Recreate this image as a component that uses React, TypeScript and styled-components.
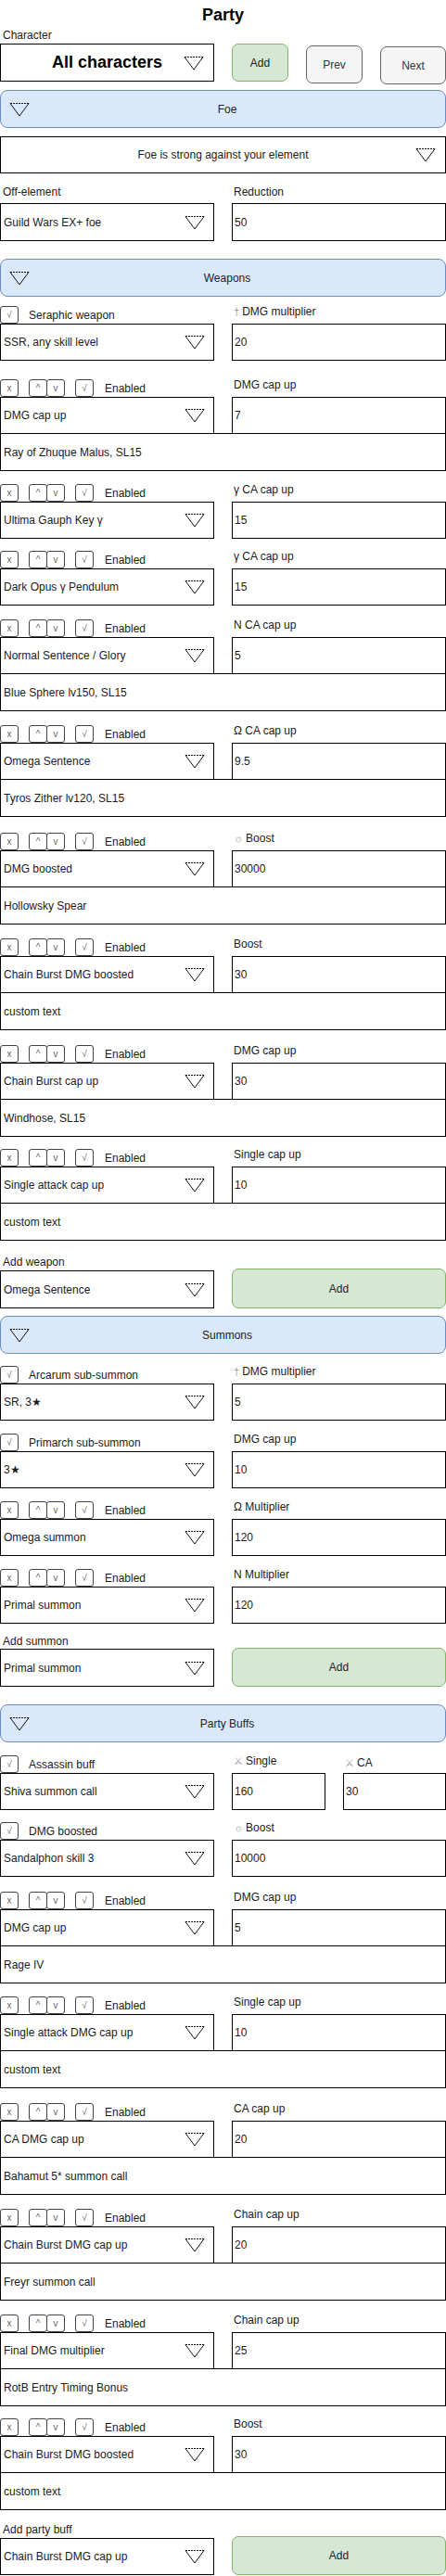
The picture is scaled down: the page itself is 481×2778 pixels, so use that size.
import React from 'react';
import styled, { createGlobalStyle } from 'styled-components';

const GlobalStyle = createGlobalStyle`
  html, body { margin: 0; padding: 0; background: #fff; }
  body { font-family: "Liberation Sans", Arial, Helvetica, sans-serif; }
  *, *::before, *::after { box-sizing: border-box; }
`;

const Page = styled.div`
  width: 481px;
  height: 2778px;
  display: flex;
  flex-direction: column;
  font-size: 12px;
  color: #1a1a1a;
`;

const Title = styled.h1`
  margin: 0;
  height: 31px;
  line-height: 32px;
  font-size: 18px;
  font-weight: bold;
  text-align: center;
  color: #000;
`;

const Label = styled.div<{ $mt?: number }>`
  margin-top: ${(p) => p.$mt ?? 0}px;
  height: 14px;
  line-height: 14px;
  padding-left: 3px;
  white-space: nowrap;
`;

const Glyph = styled.span`
  color: #999;
  font-size: 11px;
  margin-right: 3px;
`;

const TriSvg = styled.svg`
  display: block;
  flex: none;
`;

const Triangle = () => (
  <TriSvg width="22" height="16" viewBox="0 0 22 16">
    <path d="M1 1.5 L11 15 L21 1.5" fill="none" stroke="#111" strokeWidth="1" />
    <line x1="1" y1="1.5" x2="21" y2="1.5" stroke="#111" strokeWidth="1" strokeDasharray="2 1" />
  </TriSvg>
);

/* ---------- top row ---------- */
const CharRow = styled.div`
  margin-top: 2px;
  display: flex;
  align-items: flex-start;
  height: 44px;
`;

const BigSelect = styled.div`
  width: 231px;
  height: 41px;
  border: 1px solid #000;
  display: grid;
  grid-template-columns: 32px 1fr 32px;
  align-items: center;
  font-size: 18px;
  font-weight: bold;
  color: #000;
  text-align: center;
`;

const Btn = styled.div<{ $w: number; $h: number; $mt?: number; $tone: 'green' | 'gray' }>`
  width: ${(p) => p.$w}px;
  height: ${(p) => p.$h}px;
  margin-top: ${(p) => p.$mt ?? 0}px;
  margin-left: 19px;
  border-radius: 7px;
  display: flex;
  align-items: center;
  justify-content: center;
  font-size: 12px;
  color: #222;
  background: ${(p) => (p.$tone === 'green' ? '#d5e8d4' : '#f5f5f5')};
  border: 1px solid ${(p) => (p.$tone === 'green' ? '#82b366' : '#666')};
  ${(p) => (p.$tone === 'gray' ? 'color: #333;' : '')}
`;

/* ---------- section header ---------- */
const Header = styled.div<{ $mt: number }>`
  margin-top: ${(p) => p.$mt}px;
  height: 41px;
  background: #dae8fc;
  border: 1px solid #6c8ebf;
  border-radius: 8px;
  display: grid;
  grid-template-columns: 42px 1fr 42px;
  align-items: center;
  padding-left: 9px;
  color: #222;
  font-size: 12px;
  text-align: center;
`;

/* ---------- full-width centred select ---------- */
const WideSelect = styled.div<{ $mt: number }>`
  margin-top: ${(p) => p.$mt}px;
  height: 40px;
  border: 1px solid #000;
  display: grid;
  grid-template-columns: 32px 1fr 32px;
  align-items: center;
  text-align: center;
`;

/* ---------- two-column grids ---------- */
const Pair = styled.div<{ $mt?: number; $h: number; $cols?: string; $align?: string }>`
  margin-top: ${(p) => p.$mt ?? 0}px;
  height: ${(p) => p.$h}px;
  display: grid;
  grid-template-columns: ${(p) => p.$cols ?? '231px 231px'};
  column-gap: 19px;
  align-items: ${(p) => p.$align ?? 'stretch'};
`;

const Select = styled.div<{ $h?: number }>`
  height: ${(p) => p.$h ?? 40}px;
  border: 1px solid #000;
  display: flex;
  align-items: center;
  justify-content: space-between;
  padding: 0 9px 0 3px;
  white-space: nowrap;
`;

const Input = styled.div<{ $h?: number }>`
  height: ${(p) => p.$h ?? 40}px;
  border: 1px solid #000;
  display: flex;
  align-items: center;
  padding-left: 2px;
`;

const Note = styled.div`
  margin-top: -1px;
  height: 41px;
  border: 1px solid #000;
  display: flex;
  align-items: center;
  padding-left: 3px;
`;

const SideLabel = styled.div<{ $pt?: number }>`
  align-self: start;
  padding-top: ${(p) => p.$pt ?? 0}px;
  padding-left: 2px;
  line-height: 14px;
  white-space: nowrap;
`;

/* ---------- row tools ---------- */
const Tools = styled.div`
  display: flex;
  align-items: center;
  height: 20px;
`;

const Tool = styled.span<{ $ml?: number }>`
  width: 20px;
  height: 19px;
  margin-left: ${(p) => p.$ml ?? 0}px;
  border: 1px solid #444;
  border-radius: 3px;
  display: flex;
  align-items: center;
  justify-content: center;
  font-size: 10px;
  color: #666;
  flex: none;
`;

const ToolText = styled.span<{ $ml: number }>`
  margin-left: ${(p) => p.$ml}px;
  padding-top: 2px;
  white-space: nowrap;
`;

const Add = styled.div<{ $h: number }>`
  height: ${(p) => p.$h}px;
  background: #d5e8d4;
  border: 1px solid #82b366;
  border-radius: 7px;
  display: flex;
  align-items: center;
  justify-content: center;
  color: #222;
`;

type LabelSpec = { glyph?: string; text: string };

const Lbl = ({ l }: { l: LabelSpec }) => (
  <>
    {l.glyph && <Glyph>{l.glyph}</Glyph>}
    {l.text}
  </>
);

type Item =
  | { kind: 'tools'; mt: number; label: LabelSpec; select: string; value: string; note?: string }
  | { kind: 'check'; mt: number; check: string; label: LabelSpec; select: string; value: string }
  | { kind: 'add'; mt: number; label: string; select: string; btnH: number; selH: number }
  | { kind: 'header'; mt: number; title: string }
  | { kind: 'assassin'; mt: number };

const T = (
  mt: number,
  label: string,
  select: string,
  value: string,
  note?: string,
  glyph?: string
): Item => ({ kind: 'tools', mt, label: { text: label, glyph }, select, value, note });

const items: Item[] = [
  { kind: 'header', mt: 19, title: 'Weapons' },
  {
    kind: 'check',
    mt: 9,
    check: 'Seraphic weapon',
    label: { glyph: '†', text: 'DMG multiplier' },
    select: 'SSR, any skill level',
    value: '20',
  },
  T(19, 'DMG cap up', 'DMG cap up', '7', 'Ray of Zhuque Malus, SL15'),
  T(13, 'γ CA cap up', 'Ultima Gauph Key γ', '15'),
  T(12, 'γ CA cap up', 'Dark Opus γ Pendulum', '15'),
  T(14, 'N CA cap up', 'Normal Sentence / Glory', '5', 'Blue Sphere lv150, SL15'),
  T(14, 'Ω CA cap up', 'Omega Sentence', '9.5', 'Tyros Zither lv120, SL15'),
  T(16, 'Boost', 'DMG boosted', '30000', 'Hollowsky Spear', '☼'),
  T(14, 'Boost', 'Chain Burst DMG boosted', '30', 'custom text'),
  T(15, 'DMG cap up', 'Chain Burst cap up', '30', 'Windhose, SL15'),
  T(12, 'Single cap up', 'Single attack cap up', '10', 'custom text'),
  { kind: 'add', mt: 16, label: 'Add weapon', select: 'Omega Sentence', btnH: 43, selH: 41 },
  { kind: 'header', mt: 8, title: 'Summons' },
  {
    kind: 'check',
    mt: 12,
    check: 'Arcarum sub-summon',
    label: { glyph: '†', text: 'DMG multiplier' },
    select: 'SR, 3★',
    value: '5',
  },
  {
    kind: 'check',
    mt: 13,
    check: 'Primarch sub-summon',
    label: { text: 'DMG cap up' },
    select: '3★',
    value: '10',
  },
  T(13, 'Ω Multiplier', 'Omega summon', '120'),
  T(13, 'N Multiplier', 'Primal summon', '120'),
  { kind: 'add', mt: 12, label: 'Add summon', select: 'Primal summon', btnH: 42, selH: 41 },
  { kind: 'header', mt: 19, title: 'Party Buffs' },
  { kind: 'assassin', mt: 13 },
  {
    kind: 'check',
    mt: 12,
    check: 'DMG boosted',
    label: { glyph: '☼', text: 'Boost' },
    select: 'Sandalphon skill 3',
    value: '10000',
  },
  T(15, 'DMG cap up', 'DMG cap up', '5', 'Rage IV'),
  T(13, 'Single cap up', 'Single attack DMG cap up', '10', 'custom text'),
  T(15, 'CA cap up', 'CA DMG cap up', '20', 'Bahamut 5* summon call'),
  T(14, 'Chain cap up', 'Chain Burst DMG cap up', '20', 'Freyr summon call'),
  T(14, 'Chain cap up', 'Final DMG multiplier', '25', 'RotB Entry Timing Bonus'),
  T(12, 'Boost', 'Chain Burst DMG boosted', '30', 'custom text'),
  { kind: 'add', mt: 14, label: 'Add party buff', select: 'Chain Burst DMG cap up', btnH: 42, selH: 40 },
];

const RowTools = () => (
  <Tools>
    <Tool>x</Tool>
    <Tool $ml={11}>^</Tool>
    <Tool $ml={-1}>v</Tool>
    <Tool $ml={11}>√</Tool>
    <ToolText $ml={12}>Enabled</ToolText>
  </Tools>
);

const CheckTool = ({ text }: { text: string }) => (
  <Tools>
    <Tool>√</Tool>
    <ToolText $ml={11}>{text}</ToolText>
  </Tools>
);

const SelectBox = ({ text, h }: { text: string; h?: number }) => (
  <Select $h={h}>
    <span>{text}</span>
    <Triangle />
  </Select>
);

const renderItem = (it: Item, i: number) => {
  switch (it.kind) {
    case 'header':
      return (
        <Header key={i} $mt={it.mt}>
          <Triangle />
          <span>{it.title}</span>
          <span />
        </Header>
      );
    case 'tools':
      return (
        <React.Fragment key={i}>
          <Pair $mt={it.mt} $h={20}>
            <RowTools />
            <SideLabel>
              <Lbl l={it.label} />
            </SideLabel>
          </Pair>
          <Pair $h={40}>
            <SelectBox text={it.select} />
            <Input>{it.value}</Input>
          </Pair>
          {it.note && <Note>{it.note}</Note>}
        </React.Fragment>
      );
    case 'check':
      return (
        <React.Fragment key={i}>
          <Pair $mt={it.mt} $h={20}>
            <CheckTool text={it.check} />
            <SideLabel>
              <Lbl l={it.label} />
            </SideLabel>
          </Pair>
          <Pair $h={40}>
            <SelectBox text={it.select} />
            <Input>{it.value}</Input>
          </Pair>
        </React.Fragment>
      );
    case 'add':
      return (
        <React.Fragment key={i}>
          <Label $mt={it.mt}>{it.label}</Label>
          <Pair $h={it.btnH} $align="end">
            <SelectBox text={it.select} h={it.selH} />
            <Add $h={it.btnH}>Add</Add>
          </Pair>
        </React.Fragment>
      );
    case 'assassin':
      return (
        <React.Fragment key={i}>
          <Pair $mt={it.mt} $h={20} $cols="231px 101px 111px">
            <CheckTool text="Assassin buff" />
            <SideLabel>
              <Lbl l={{ glyph: '⚔', text: 'Single' }} />
            </SideLabel>
            <SideLabel $pt={2}>
              <Lbl l={{ glyph: '⚔', text: 'CA' }} />
            </SideLabel>
          </Pair>
          <Pair $h={40} $cols="231px 101px 111px">
            <SelectBox text="Shiva summon call" />
            <Input>160</Input>
            <Input>30</Input>
          </Pair>
        </React.Fragment>
      );
  }
};

export default function App() {
  return (
    <>
      <GlobalStyle />
      <Page>
        <Title>Party</Title>
        <Label>Character</Label>
        <CharRow>
          <BigSelect>
            <span />
            <span>All characters</span>
            <Triangle />
          </BigSelect>
          <Btn $w={61} $h={41} $tone="green">
            Add
          </Btn>
          <Btn $w={61} $h={41} $mt={2} $tone="gray">
            Prev
          </Btn>
          <Btn $w={71} $h={41} $mt={3} $tone="gray">
            Next
          </Btn>
        </CharRow>
        <Header $mt={6}>
          <Triangle />
          <span>Foe</span>
          <span />
        </Header>
        <WideSelect $mt={9}>
          <span />
          <span>Foe is strong against your element</span>
          <Triangle />
        </WideSelect>
        <Pair $mt={13} $h={14}>
          <Label>Off-element</Label>
          <SideLabel>Reduction</SideLabel>
        </Pair>
        <Pair $mt={5} $h={41}>
          <SelectBox text="Guild Wars EX+ foe" h={41} />
          <Input $h={41}>50</Input>
        </Pair>
        {items.map(renderItem)}
      </Page>
    </>
  );
}
